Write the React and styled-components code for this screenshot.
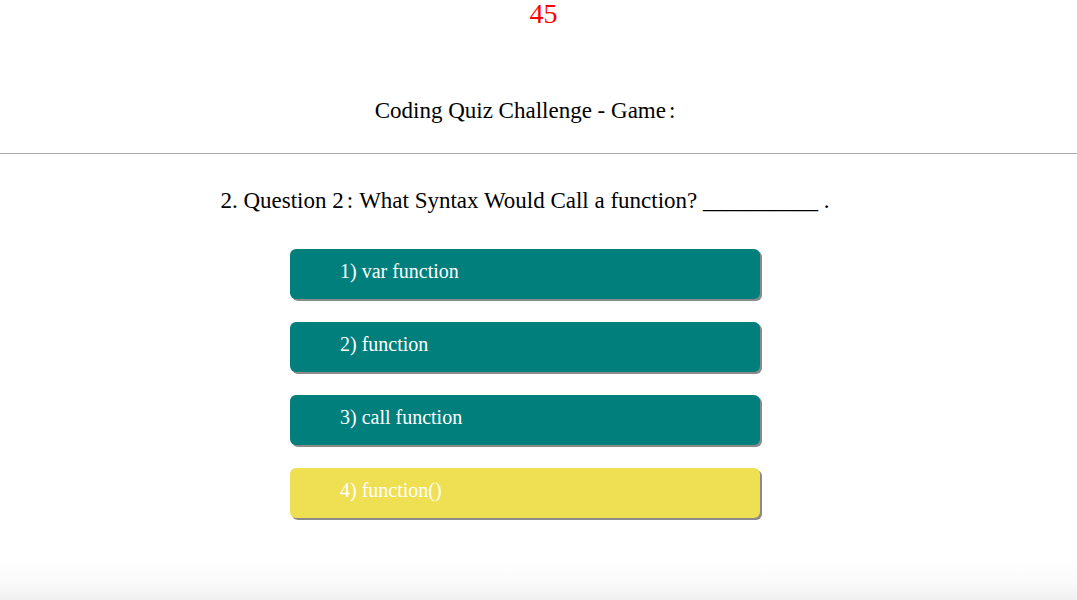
import styled, { createGlobalStyle } from "styled-components";

const GlobalStyle = createGlobalStyle`
  html, body {
    margin: 0;
    padding: 0;
  }
  body {
    min-height: 100vh;
    font-family: "Liberation Serif", serif;
    background: linear-gradient(to bottom, #fff 0%, #fff 93%, #fafafa 97%, #f0f0f0 100%);
  }
`;

const Page = styled.div`
  display: flex;
  flex-direction: column;
  align-items: stretch;
`;

const Timer = styled.div`
  text-align: center;
  color: #ff0000;
  font-size: 28px;
  line-height: 28px;
  padding-left: 10px;
`;

const Header = styled.header`
  text-align: center;
  padding: 70px 27px 29px 0;
  border-bottom: 1px solid #a9a9a9;

  h1 {
    margin: 0;
    font-size: 23px;
    font-weight: normal;
    color: #000;
  }
`;

const Colon = styled.span`
  margin: 0 ${(p) => p.$after || 0}px 0 3px;
`;

const Quiz = styled.section`
  display: flex;
  flex-direction: column;
  align-items: center;
  padding: 34px 27px 0 0;
`;

const Question = styled.h2`
  margin: 0 0 35px;
  font-size: 23px;
  font-weight: normal;
  color: #000;
`;

const Choices = styled.div`
  display: flex;
  flex-direction: column;
  gap: 23px;
`;

const Choice = styled.button`
  width: 470px;
  height: 50px;
  border: none;
  border-radius: 6px;
  background-color: ${(p) => (p.$picked ? "#efe053" : "#007f7d")};
  box-shadow: 2px 2px 0 #8a8a8a;
  color: #fff;
  font-family: "Liberation Serif", serif;
  font-size: 20px;
  text-align: left;
  padding: 0 0 6px 50px;
  cursor: pointer;
`;

const answers = ["1) var function", "2) function", "3) call function", "4) function()"];

export default function App() {
  return (
    <Page>
      <GlobalStyle />
      <Timer>45</Timer>
      <Header>
        <h1>
          Coding Quiz Challenge - Game<Colon>:</Colon>
        </h1>
      </Header>
      <Quiz>
        <Question>
          2. Question 2<Colon $after={6}>:</Colon>What Syntax Would Call a function? __________ .
        </Question>
        <Choices>
          {answers.map((a, i) => (
            <Choice key={a} $picked={i === 3}>
              {a}
            </Choice>
          ))}
        </Choices>
      </Quiz>
    </Page>
  );
}
